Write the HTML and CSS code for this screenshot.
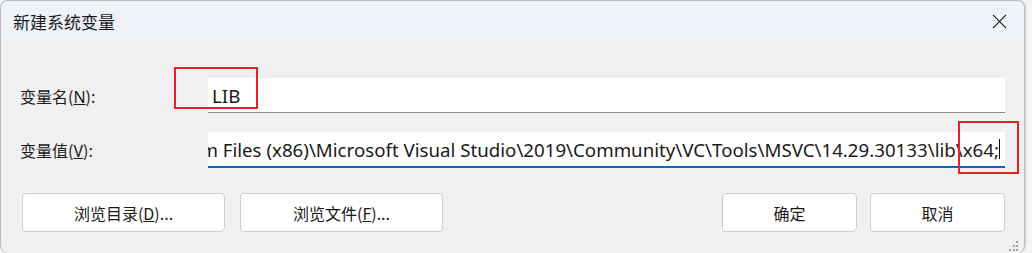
FILE: index.html
```html
<!DOCTYPE html>
<html lang="zh-CN">
<head>
    <meta charset="UTF-8">
    <title>新建系统变量</title>
    <link rel="stylesheet" href="styles.css">
</head>
<body>
    <div class="window">
        <div class="titlebar">
            <span class="title">新建系统变量</span>
            <svg class="close" width="16" height="16" viewBox="0 0 16 16">
                <path d="M1 1 L15 15 M15 1 L1 15" stroke="#1a1a1a" stroke-width="1.2" fill="none"/>
            </svg>
        </div>

        <div class="content">
            <div class="row">
                <label class="label">变量名(<u>N</u>):</label>
                <div class="field">
                    <span class="text">LIB</span>
                </div>
            </div>

            <div class="row row-value">
                <label class="label">变量值(<u>V</u>):</label>
                <div class="field field-focus">
                    <span class="text">Program Files (x86)\Microsoft Visual Studio\2019\Community\VC\Tools\MSVC\14.29.30133\lib\x64;</span>
                    <span class="caret"></span>
                </div>
            </div>

            <div class="buttons">
                <div class="group">
                    <button class="btn btn-wide">浏览目录(<u>D</u>)...</button>
                    <button class="btn btn-wide">浏览文件(<u>F</u>)...</button>
                </div>
                <div class="group group-right">
                    <button class="btn">确定</button>
                    <button class="btn">取消</button>
                </div>
                <svg class="grip" width="12" height="12" viewBox="0 0 12 12">
                    <rect x="8" y="0" width="2" height="2" fill="#a3a3a3"/>
                    <rect x="5" y="4" width="2" height="2" fill="#a3a3a3"/>
                    <rect x="8" y="4" width="2" height="2" fill="#a3a3a3"/>
                    <rect x="1" y="8" width="2" height="2" fill="#a3a3a3"/>
                    <rect x="5" y="8" width="2" height="2" fill="#a3a3a3"/>
                    <rect x="8" y="8" width="2" height="2" fill="#a3a3a3"/>
                </svg>
            </div>
        </div>

        <!-- annotation boxes drawn over the dialog -->
        <div class="mark mark-name"></div>
        <div class="mark mark-value"></div>
    </div>
</body>
</html>
```

FILE: styles.css
```css
* {
    box-sizing: border-box;
    margin: 0;
    padding: 0;
}

body {
    background: #f4f4f4;
    font-family: "Noto Sans", "Noto Sans CJK SC", sans-serif;
    color: #1a1a1a;
    overflow: hidden;
}

.window {
    position: relative;
    width: 1025px;
    height: 253px;
    background: #f0f0f0;
    border: 1px solid #b9b9b9;
    border-bottom: none;
    border-radius: 8px 8px 8px 8px;
    overflow: hidden;
    box-shadow: 1px 0 2px rgba(0, 0, 0, 0.15);
}

.titlebar {
    height: 41px;
    background: #eff3f9;
    display: flex;
    align-items: center;
    justify-content: space-between;
    padding: 0 17px 0 12px;
}

.title {
    font-size: 17px;
    font-family: "Noto Sans CJK SC", sans-serif;
}

.close {
    display: block;
    width: 15px;
    height: 15px;
}

.content {
    padding: 36px 19px 0 19px;
}

.row {
    display: flex;
    align-items: center;
    height: 35px;
}

.row-value {
    margin-top: 19px;
    height: 36px;
}

.label {
    width: 188px;
    font-size: 16px;
    font-family: "Noto Sans CJK SC", sans-serif;
}

.label u {
    font-family: "Noto Sans", sans-serif;
}

.field {
    flex: 1;
    height: 100%;
    background: #ffffff;
    border-bottom: 1px solid #8b8b8b;
    display: flex;
    align-items: center;
    padding-left: 4px;
    overflow: hidden;
    white-space: nowrap;
}

.field-focus {
    border-bottom: 2px solid #0067c0;
    justify-content: flex-end;
    padding-left: 0;
    padding-right: 5px;
}

.text {
    font-size: 18.7px;
    flex-shrink: 0;
}

.caret {
    width: 1px;
    height: 20px;
    background: #000;
    flex-shrink: 0;
}

.buttons {
    position: relative;
    display: flex;
    justify-content: space-between;
    margin-top: 25px;
    padding-left: 2px;
}

.group {
    display: flex;
    gap: 15px;
}

.group-right {
    gap: 13px;
}

.btn {
    width: 135px;
    height: 39px;
    background: #ffffff;
    border: 1px solid #cdcdcd;
    border-radius: 4px;
    font-size: 16px;
    font-family: "Noto Sans CJK SC", sans-serif;
    color: #1a1a1a;
}

.btn-wide {
    width: 203px;
}

.grip {
    position: absolute;
    right: -15px;
    top: 48px;
}

.mark {
    position: absolute;
    border: 2px solid #e5212b;
}

.mark-name {
    left: 173px;
    top: 66px;
    width: 84px;
    height: 42px;
}

.mark-value {
    left: 957px;
    top: 120px;
    width: 61px;
    height: 53px;
}
```
